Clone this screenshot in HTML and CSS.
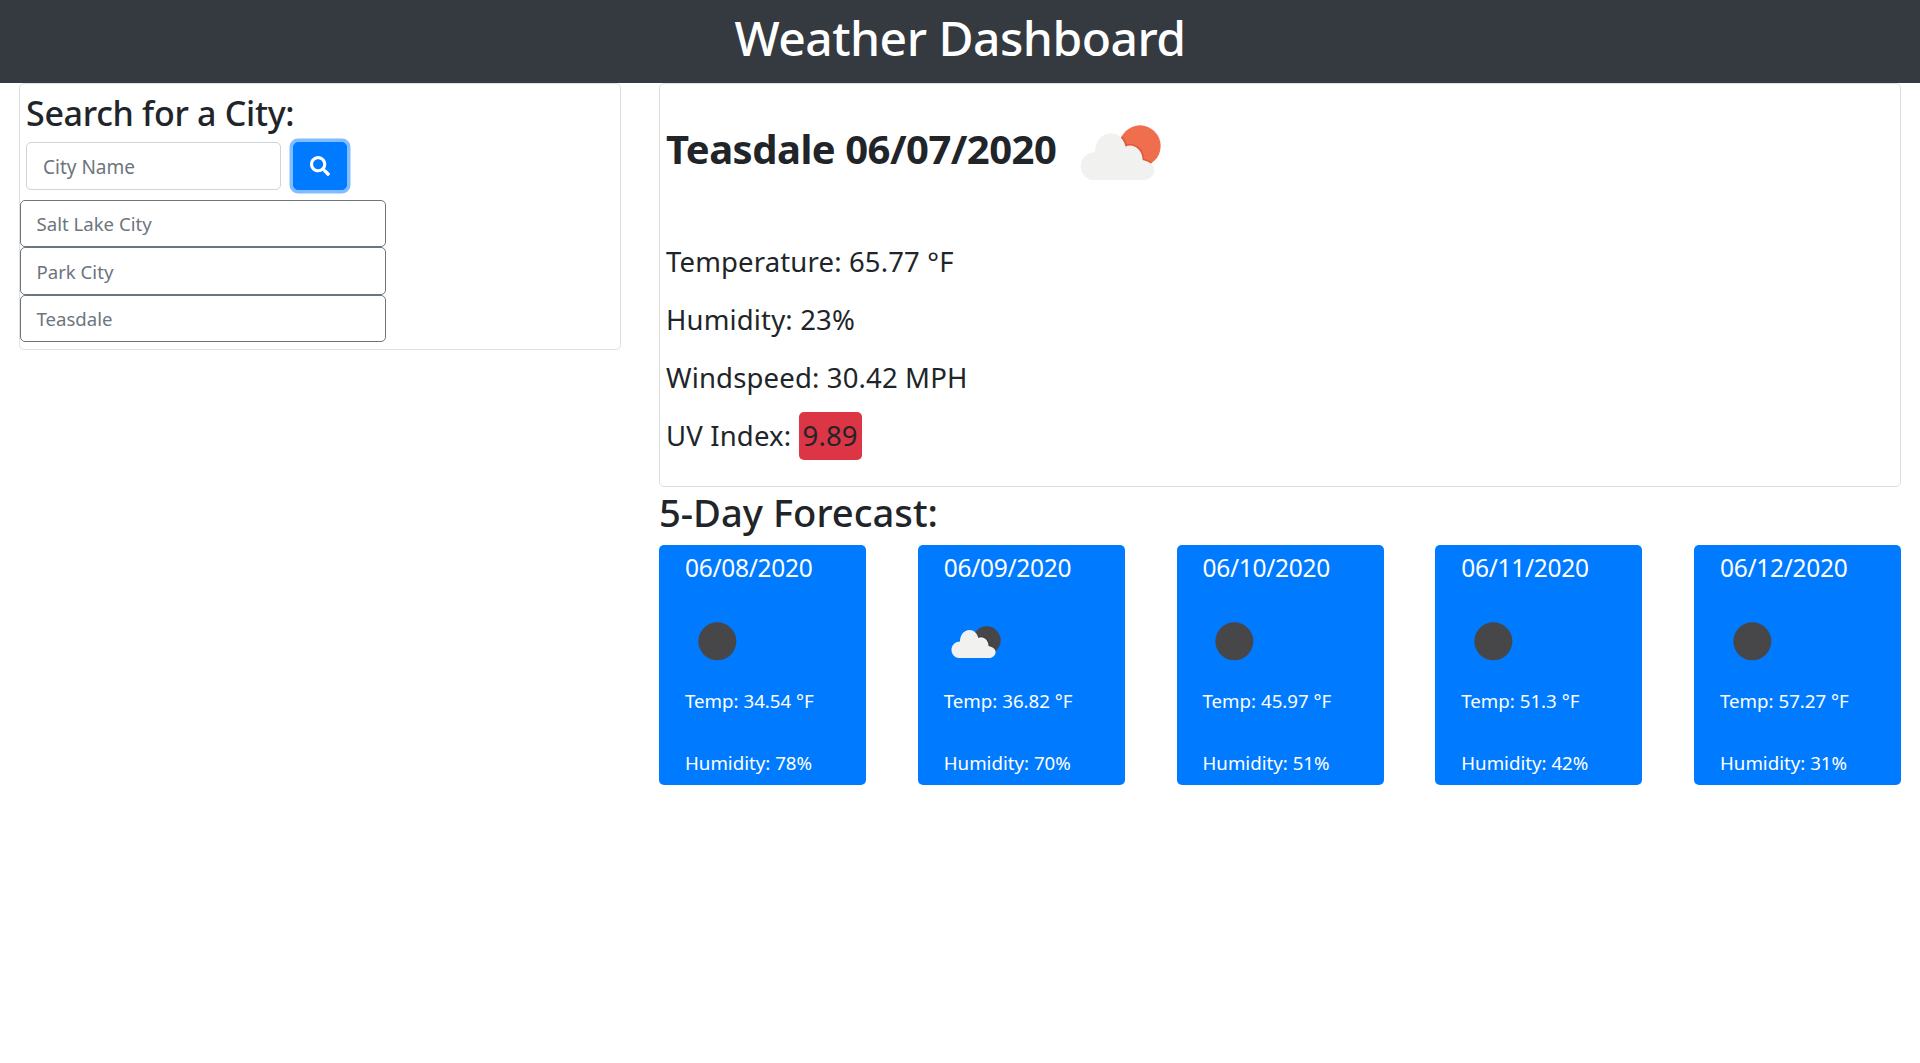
FILE: index.html
```html
<!DOCTYPE html>
<html lang="en">
<head>
  <meta charset="UTF-8" />
  <title>Weather Dashboard</title>
  <meta name="viewport" content="width=device-width, initial-scale=1.0" />
  <link rel="stylesheet" href="styles.css">
</head>
<body>
  <header class="site-header">
    <h1>Weather Dashboard</h1>
  </header>

  <main class="layout">
    <section class="search-col">
      <div class="search-card">
        <h3 class="search-title">Search for a City:</h3>
        <form class="search-form">
          <input class="city-input" type="text" placeholder="City Name" />
          <button class="search-btn" type="button" aria-label="Search">
            <svg viewBox="0 0 512 512" width="20" height="20"><path fill="#fff" d="M505 442.700 405.300 343c-4.500-4.500-10.600-7-17-7H372c27.600-35.300 44-79.700 44-128C416 93.100 322.900 0 208 0S0 93.100 0 208s93.100 208 208 208c48.300 0 92.700-16.400 128-44v16.300c0 6.400 2.500 12.500 7 17l99.700 99.700c9.400 9.400 24.600 9.400 33.900 0l28.300-28.300c9.400-9.400 9.400-24.600.1-34zM208 336c-70.700 0-128-57.200-128-128 0-70.700 57.200-128 128-128 70.700 0 128 57.200 128 128 0 70.700-57.200 128-128 128z"/></svg>
          </button>
        </form>
        <button class="city-btn" type="button">Salt Lake City</button>
        <button class="city-btn" type="button">Park City</button>
        <button class="city-btn" type="button">Teasdale</button>
      </div>
    </section>

    <section class="main-col">
      <div class="today-card">
        <div class="today-head">
          <h2 class="today-title">Teasdale 06/07/2020</h2>
          <svg class="today-icon" viewBox="-6 -72 375 375">
            <clipPath id="sunClip"><circle cx="240" cy="108" r="62"/></clipPath>
            <circle cx="240" cy="108" r="62" fill="#ee6e4d"/>
            <path clip-path="url(#sunClip)" fill="none" stroke="#e2583a" stroke-width="10" d="M95 210a42 42 0 0 1 10-83c0-32 20-57 47-57 23 0 38 15 45 40 8-5 18-5 28 0 14 7 23 22 23 40 20 5 35 15 35 30 0 17-15 30-33 30z"/>
            <path fill="#f1f1ef" d="M95 210a42 42 0 0 1 10-83c0-32 20-57 47-57 23 0 38 15 45 40 8-5 18-5 28 0 14 7 23 22 23 40 20 5 35 15 35 30 0 17-15 30-33 30z"/>
          </svg>
        </div>
        <p class="stat">Temperature: 65.77 °F</p>
        <p class="stat">Humidity: 23%</p>
        <p class="stat">Windspeed: 30.42 MPH</p>
        <p class="stat uv">UV Index: <span class="uv-badge">9.89</span></p>
      </div>

      <h3 class="forecast-title">5-Day Forecast:</h3>
      <div class="forecast-row">
        <div class="day-card">
          <h5 class="day-date">06/08/2020</h5>
          <svg class="day-icon" viewBox="41 -30 225 225"><circle cx="138" cy="91" r="57" fill="#474649"/></svg>
          <p class="day-text">Temp: 34.54 °F</p>
          <p class="day-text">Humidity: 78%</p>
        </div>
        <div class="day-card">
          <h5 class="day-date">06/09/2020</h5>
          <svg class="day-icon" viewBox="41 -30 225 225">
            <circle cx="172" cy="88" r="42" fill="#474649"/>
            <path transform="translate(29 15) scale(.6)" fill="none" stroke="#35343a" stroke-width="8" d="M197 110c8-5 18-5 28 0 14 7 23 22 23 40"/>
            <path transform="translate(29 15) scale(.6)" fill="#f1f1ef" d="M95 210a42 42 0 0 1 10-83c0-32 20-57 47-57 23 0 38 15 45 40 8-5 18-5 28 0 14 7 23 22 23 40 20 5 35 15 35 30 0 17-15 30-33 30z"/>
          </svg>
          <p class="day-text">Temp: 36.82 °F</p>
          <p class="day-text">Humidity: 70%</p>
        </div>
        <div class="day-card">
          <h5 class="day-date">06/10/2020</h5>
          <svg class="day-icon" viewBox="41 -30 225 225"><circle cx="138" cy="91" r="57" fill="#474649"/></svg>
          <p class="day-text">Temp: 45.97 °F</p>
          <p class="day-text">Humidity: 51%</p>
        </div>
        <div class="day-card">
          <h5 class="day-date">06/11/2020</h5>
          <svg class="day-icon" viewBox="41 -30 225 225"><circle cx="138" cy="91" r="57" fill="#474649"/></svg>
          <p class="day-text">Temp: 51.3 °F</p>
          <p class="day-text">Humidity: 42%</p>
        </div>
        <div class="day-card">
          <h5 class="day-date">06/12/2020</h5>
          <svg class="day-icon" viewBox="41 -30 225 225"><circle cx="138" cy="91" r="57" fill="#474649"/></svg>
          <p class="day-text">Temp: 57.27 °F</p>
          <p class="day-text">Humidity: 31%</p>
        </div>
      </div>
    </section>
  </main>
</body>
</html>
```

FILE: styles.css
```css
* {
  box-sizing: border-box;
}
body {
  margin: 0;
  font-family: "Noto Sans", "Open Sans", sans-serif;
  font-size: 20px;
  line-height: 1.5;
  color: #212529;
  background-color: #fff;
}
h1, h2, h3, h5, p {
  margin: 0;
  font-weight: 400;
}

.site-header {
  background-color: #343a40;
  color: #fff;
  height: 83px;
  text-align: center;
}
.site-header h1 {
  font-size: 48px;
  line-height: 76px;
  font-weight: 500;
  letter-spacing: -0.5px;
}

.layout {
  display: grid;
  grid-template-columns: 1fr 2fr;
  align-items: start;
}
.search-col, .main-col {
  padding: 0 19px;
}

.search-card {
  border: 1px solid #dfdfdf;
  border-radius: 5px;
  height: 267px;
}
.search-title {
  font-size: 34px;
  line-height: 42px;
  font-weight: 500;
  padding: 8px 0 0 6px;
  box-sizing: content-box;
  letter-spacing: -0.3px;
}
.search-form {
  display: flex;
  gap: 12px;
  padding: 8px 6px 10px;
  align-items: center;
}
.city-input {
  width: 255px;
  height: 47.500px;
  padding: 2px 16px 0;
  font: inherit;
  font-size: 19px;
  border: 1px solid #ced4da;
  border-radius: 5px;
}
.city-input::placeholder {
  color: #6c757d;
}
.search-btn {
  width: 54px;
  height: 47.500px;
  background-color: #007bff;
  border: 1px solid #007bff;
  border-radius: 5px;
  box-shadow: 0 0 0 3.500px rgba(0,123,255,0.5);
  display: flex;
  align-items: center;
  justify-content: center;
}
.city-btn {
  display: block;
  width: 366px;
  height: 47.500px;
  padding: 2px 15.500px 0;
  background: #fff;
  color: #6c757d;
  font: inherit;
  font-size: 18.600px;
  text-align: left;
  border: 1px solid #6c757d;
  border-radius: 5px;
}

.today-card {
  border: 1px solid #dfdfdf;
  border-radius: 5px;
  height: 404px;
  padding: 0 6px;
}
.today-head {
  display: flex;
  align-items: center;
  height: 159px;
  padding-bottom: 30px;
}
.today-title {
  font-size: 40px;
  font-weight: 700;
  letter-spacing: -0.5px;
}
.today-icon {
  flex-shrink: 0;
  width: 125px;
  height: 125px;
  margin-left: 2px;
}
.stat {
  font-size: 27.500px;
  line-height: 38px;
  margin-bottom: 20px;
  letter-spacing: 0.15px;
}
.uv {
  margin-bottom: 0;
}
.uv-badge {
  display: inline-block;
  background-color: #dc3545;
  border-radius: 5px;
  padding: 5px 4px;
  margin: -5px 0;
}

.forecast-title {
  font-size: 38.200px;
  line-height: 42px;
  font-weight: 500;
  margin: 4px 0 12px;
}
.forecast-row {
  display: flex;
  justify-content: space-between;
}
.day-card {
  width: 207px;
  height: 240px;
  padding: 5px 25px 0 26px;
  background-color: #007bff;
  color: #fff;
  border-radius: 5px;
}
.day-date {
  font-size: 24.500px;
  line-height: 36px;
  letter-spacing: -0.3px;
}
.day-icon {
  display: block;
  width: 75px;
  height: 75px;
  margin: 14.500px 0 10.500px -0.500px;
}
.day-text {
  font-size: 18.700px;
  line-height: 30px;
  margin-bottom: 32px;
}
```
